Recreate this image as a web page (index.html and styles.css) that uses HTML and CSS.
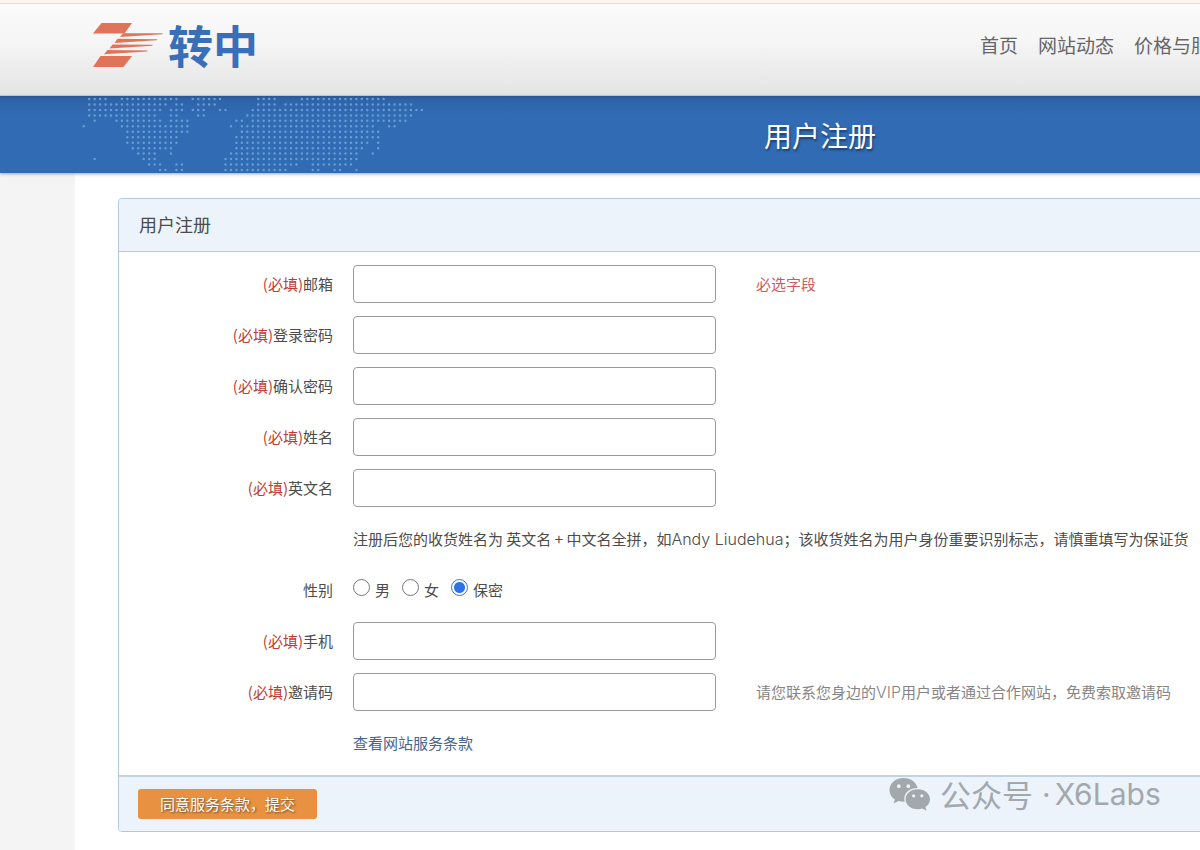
FILE: index.html
```html
<!DOCTYPE html>
<html lang="zh-CN">
<head>
<meta charset="utf-8">
<title>用户注册</title>
<link rel="stylesheet" href="styles.css">
</head>
<body>
<div class="page">
  <header class="header">
    <a class="logo" href="#" aria-label="转中">
      <svg class="logo-mark" viewBox="0 0 72 46" aria-hidden="true">
        <path d="M9.500 1H40L32.500 11.500H1ZM8.500 34H40L31.500 45H1Z"/>
        <path d="M31 11.200L71 11.300L70 12.300L28 15ZM25.500 16.700L65.500 17.200L64.500 18.200L22.500 21ZM20.500 22.400L61 22.700L60 23.700L17.500 26.500ZM15.500 28L56 28.600L55 29.600L12 32.200Z"/>
      </svg>
      <span class="logo-text">转中</span>
    </a>
    <nav class="nav">
      <a href="#">首页</a>
      <a href="#">网站动态</a>
      <a href="#">价格与服务</a>
    </nav>
  </header>

  <div class="banner">
    <svg class="map" viewBox="-0.500 -0.500 64 14" aria-hidden="true">
      <path d="M1 0h3.100M7 0h10.100M20 0h5.100M32 0h3.100M40 0h15.100
        M1 1h14.100M17 1h1.100M21 1h3.100M32 1h3.100M37 1h23.100
        M1 2h13.100M16 2h2.100M20 2h2.100M25 2h1.100M31 2h31.100
        M1 3h12.100M16 3h1.100M21 3h1.100M30 3h30.100
        M2 4h.1M6 4h8.100M16 4h3.100M28 4h1.100M31 4h28.100
        M0 5h.1M7 5h12.100M27 5h.1M29 5h24.100M56 5h1.100
        M8 6h11.100M29 6h25.100
        M8 7h9.100M28 7h26.100
        M8 8h9.100M28 8h24.100M54 8h.1
        M9 9h7.100M28 9h23.100M54 9h.1
        M10 10h3.100M16 10h.1M27 10h23.100M53 10h.1
        M2 11h.1M11 11h2.100M26 11h24.100
        M12 12h2.100M17 12h1.100M26 12h13.100M42 12h7.100
        M14 13h1.100M17 13h1.100M26 13h11.100M42 13h1.100M46 13h1.100M50 13h.1"/>
    </svg>
    <h1 class="banner-title">用户注册</h1>
  </div>

  <main class="content">
    <form class="panel">
      <h2 class="panel-head">用户注册</h2>
      <div class="panel-body">
        <div class="row">
          <label class="label" for="email"><span class="must">(必填)</span>邮箱</label>
          <input class="field" id="email" type="email">
          <span class="hint error">必选字段</span>
        </div>
        <div class="row">
          <label class="label" for="password"><span class="must">(必填)</span>登录密码</label>
          <input class="field" id="password" type="password">
        </div>
        <div class="row">
          <label class="label" for="confirm"><span class="must">(必填)</span>确认密码</label>
          <input class="field" id="confirm" type="password">
        </div>
        <div class="row">
          <label class="label" for="name"><span class="must">(必填)</span>姓名</label>
          <input class="field" id="name" type="text">
        </div>
        <div class="row">
          <label class="label" for="ename"><span class="must">(必填)</span>英文名</label>
          <input class="field" id="ename" type="text">
        </div>
        <div class="row">
          <p class="wide">注册后您的收货姓名为 英文名 + 中文名全拼，如<span class="latin">Andy Liudehua</span>；该收货姓名为用户身份重要识别标志，请慎重填写为保证货</p>
        </div>
        <div class="row" role="radiogroup" aria-labelledby="sex">
          <span class="label" id="sex">性别</span>
          <div class="radios">
            <label class="radio"><input type="radio" name="sex"><span>男</span></label>
            <label class="radio"><input type="radio" name="sex"><span>女</span></label>
            <label class="radio"><input type="radio" name="sex" checked><span>保密</span></label>
          </div>
        </div>
        <div class="row">
          <label class="label" for="phone"><span class="must">(必填)</span>手机</label>
          <input class="field" id="phone" type="tel">
        </div>
        <div class="row">
          <label class="label" for="invite"><span class="must">(必填)</span>邀请码</label>
          <input class="field" id="invite" type="text">
          <span class="hint">请您联系您身边的<span class="latin">VIP</span>用户或者通过合作网站，免费索取邀请码</span>
        </div>
        <div class="row">
          <a class="wide terms" href="#">查看网站服务条款</a>
        </div>
      </div>
      <div class="panel-foot">
        <button class="submit" type="button">同意服务条款，提交</button>
      </div>
    </form>
  </main>
</div>

<div class="watermark">
  <svg class="wechat" viewBox="0 0 42 34" aria-hidden="true">
    <path fill-rule="evenodd" d="M14.500 1C6.500 1 .5 6.200.5 13c0 4 2 7.300 5.400 9.500L4.500 26.500l5-2.500c2 .6 4 .9 6.300.8A11.500 11.500 0 0 1 15.200 22C15.200 15.500 21 11 28.500 11C27.500 5 21.500 1 14.500 1ZM9.800 7.300a1.900 1.900 0 1 1 0 3.800a1.900 1.900 0 0 1 0-3.800ZM19.300 7.300a1.900 1.900 0 1 1 0 3.800a1.900 1.900 0 0 1 0-3.800Z"/>
    <path fill-rule="evenodd" d="M28.700 12.200C21.500 12.200 16.500 16.800 16.500 22.200s5 10 12.200 10c1.700 0 3.200-.2 4.700-.7l4.200 2.200l-1.200-3.700c3-2 4.600-4.600 4.600-7.800C41 16.800 36 12.200 28.700 12.200ZM24.600 17.200a1.600 1.600 0 1 1 0 3.200a1.600 1.600 0 0 1 0-3.200ZM32.800 17.200a1.600 1.600 0 1 1 0 3.200a1.600 1.600 0 0 1 0-3.200Z"/>
  </svg>
  <span>公众号</span>
  <span class="account"><span>·</span><span>X6Labs</span></span>
</div>
</body>
</html>
```

FILE: styles.css
```css
* {
  box-sizing: border-box;
}

body {
  margin: 0;
  overflow: hidden;
  background: #f4f4f4;
  color: #4c4c4c;
  font: 15px/24px "Noto Sans CJK SC", sans-serif;
}

h1,
h2,
p {
  margin: 0;
  font-weight: 400;
}

a {
  color: inherit;
  text-decoration: none;
}

.page {
  min-width: 1640px;
}

.header {
  display: flex;
  align-items: flex-start;
  height: 96px;
  padding: 16px 92px 0;
  border-top: 3px solid #fdf3ee;
  border-bottom: 1px solid #c9cdd2;
  background: linear-gradient(#fafafa, #f6f6f6 40%, #e4e4e4);
  box-shadow: inset 0 1px #e6dcd8;
}

.logo {
  display: flex;
  align-items: center;
  gap: 4px;
  width: 888px;
}

.logo-mark {
  width: 72px;
  height: 46px;
  fill: #e0745a;
}

.logo-text {
  color: #386fb8;
  font-size: 45px;
  font-weight: 700;
  line-height: 52px;
}

.nav {
  display: flex;
  gap: 20px;
  padding-top: 12px;
  color: #666;
  font-size: 19px;
  line-height: 28px;
  white-space: nowrap;
}

.banner {
  position: relative;
  display: grid;
  align-items: center;
  height: 77px;
  background: linear-gradient(#2b5591, #2f62a8 3px, #306bb3 18px, #306bb3);
  box-shadow: 0 1px 3px #9aa4b2;
}

.banner > * {
  grid-area: 1 / 1;
}

.map {
  width: 349px;
  height: 77px;
  margin-left: 81px;
  fill: none;
  stroke: #659dd3;
  stroke-width: 0.46;
  stroke-linecap: round;
  stroke-dasharray: 0 1;
}

.banner-title {
  color: #fff;
  font-size: 28px;
  line-height: 40px;
  text-align: center;
  text-shadow: 1px 2px 2px #1d3f70;
}

.content {
  margin: 0 75px;
  padding: 25px 43px;
  background: #fff;
}

.panel {
  border: 1px solid #b1c9dc;
  border-radius: 4px;
  overflow: hidden;
}

.panel-head {
  padding: 12px 20px 13px;
  border-bottom: 1px solid #b1c9dc;
  background: #ecf3fa;
  font-size: 18px;
  line-height: 27px;
}

.panel-body {
  padding: 6px 0 7px;
}

.row {
  display: grid;
  grid-template-columns: 214px 363px 1fr;
  align-items: center;
  column-gap: 20px;
  height: 51px;
}

.label {
  text-align: right;
}

.must {
  color: #c23b33;
}

.field {
  width: 100%;
  height: 38px;
  padding: 0 10px;
  border: 1px solid #999;
  border-radius: 4px;
  background: #fff;
  font: inherit;
}

.hint {
  padding-left: 20px;
  color: #858585;
}

.error {
  color: #cd5c5f;
}

.wide {
  grid-column: 2 / 4;
  white-space: nowrap;
}

.latin {
  font-family: Inter, sans-serif;
  font-size: 16px;
  font-weight: 300;
}

.radios {
  display: flex;
  gap: 12px;
}

.radio {
  display: flex;
  align-items: center;
  gap: 5px;
}

.radio input {
  appearance: none;
  width: 17px;
  height: 17px;
  margin: 0 0 4px;
  border: 1px solid #767676;
  border-radius: 50%;
  background: #fff;
}

.radio input:checked {
  border-color: #2f73e8;
  background: radial-gradient(circle, #2f73e8 5px, #fff 6px);
}

.terms {
  color: #44658f;
}

.panel-foot {
  padding: 12px 19px;
  border-top: 2px solid #c3d3e0;
  background: #ecf3fa;
}

.submit {
  display: block;
  height: 30px;
  padding: 0 22px;
  border: 0;
  border-radius: 3px;
  background: #e79141;
  color: #fff;
  font: 15px/30px "Noto Sans CJK SC", sans-serif;
  text-shadow: 1px 1px 2px #6b4a25;
}

.watermark {
  position: absolute;
  top: 774px;
  left: 889px;
  display: flex;
  align-items: center;
  gap: 9px;
  color: #a3a8ad;
  font-size: 31px;
  line-height: 40px;
}

.wechat {
  width: 42px;
  height: 34px;
  fill: #a3a8ad;
}

.account {
  display: flex;
  gap: 4px;
  font-family: Inter, sans-serif;
  font-size: 30px;
}
```
